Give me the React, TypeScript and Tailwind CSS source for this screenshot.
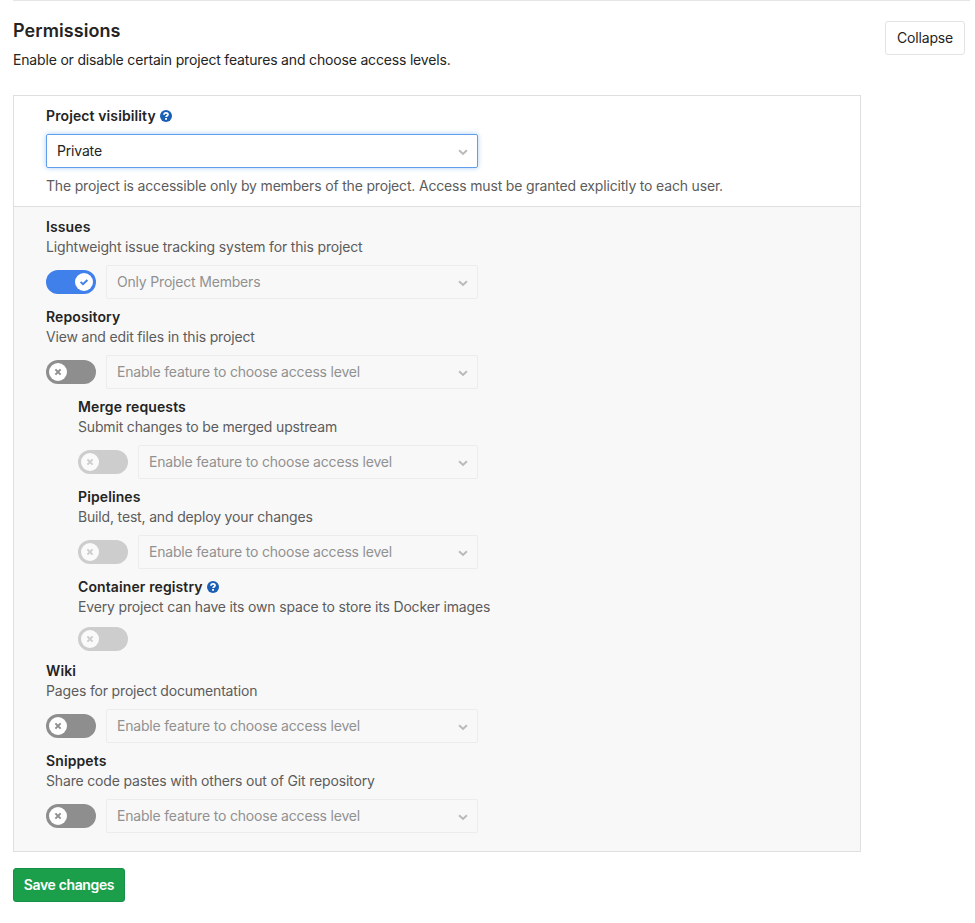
import { ReactNode } from 'react'

interface Feature {
  id: string
  label: string
  description: string
  enabled?: boolean
  disabled?: boolean
  nested?: boolean
  help?: boolean
  access?: string
}

const NO_ACCESS = 'Enable feature to choose access level'

const features: Feature[] = [
  {
    id: 'issues',
    label: 'Issues',
    description: 'Lightweight issue tracking system for this project',
    enabled: true,
    access: 'Only Project Members',
  },
  {
    id: 'repository',
    label: 'Repository',
    description: 'View and edit files in this project',
    access: NO_ACCESS,
  },
  {
    id: 'merge-requests',
    label: 'Merge requests',
    description: 'Submit changes to be merged upstream',
    nested: true,
    disabled: true,
    access: NO_ACCESS,
  },
  {
    id: 'pipelines',
    label: 'Pipelines',
    description: 'Build, test, and deploy your changes',
    nested: true,
    disabled: true,
    access: NO_ACCESS,
  },
  {
    id: 'registry',
    label: 'Container registry',
    description: 'Every project can have its own space to store its Docker images',
    nested: true,
    disabled: true,
    help: true,
  },
  {
    id: 'wiki',
    label: 'Wiki',
    description: 'Pages for project documentation',
    access: NO_ACCESS,
  },
  {
    id: 'snippets',
    label: 'Snippets',
    description: 'Share code pastes with others out of Git repository',
    access: NO_ACCESS,
  },
]

function HelpIcon() {
  return (
    <svg className="ml-1 size-3" viewBox="0 0 12 12" fill="none">
      <circle cx="6" cy="6" r="6" fill="#1b5fb4" />
      <path d="M4 4.7C4.1 3.4 4.9 2.8 6 2.8c1.2 0 2 .6 2 1.6 0 1.3-1.9 1.2-1.9 2.7" stroke="#fff" strokeWidth="1.8" />
      <path d="M5.1 8h1.9v1.7H5.1z" fill="#fff" />
    </svg>
  )
}

function ChevronIcon() {
  return (
    <svg className="mt-0.5 h-[7px] w-2.5" viewBox="0 0 10 7" fill="none">
      <path d="M1.1 1.2 5 4.9l3.9-3.7" stroke="#bababa" strokeWidth="2" />
    </svg>
  )
}

function FieldLabel({ children, help }: { children: ReactNode; help?: boolean }) {
  return (
    <div className="flex h-5 items-center font-semibold tracking-[0.11px] text-[#242424]">
      {children}
      {help && <HelpIcon />}
    </div>
  )
}

function Toggle({ enabled, disabled }: { enabled?: boolean; disabled?: boolean }) {
  return (
    <button
      type="button"
      disabled={disabled}
      className={`flex h-6 w-[50px] shrink-0 items-center rounded-full px-[3px] ${
        enabled ? 'justify-end bg-[#4080eb]' : 'bg-[#8e8e8e]'
      } ${disabled ? 'opacity-40' : ''}`}
    >
      <svg className="size-[18px]" viewBox="0 0 18 18" fill="none">
        <circle cx="9" cy="9" r="9" fill="#fff" />
        {enabled ? (
          <path d="m5.6 8.9 2.4 2.3 4.4-4.2" stroke="#4080eb" strokeWidth="2" />
        ) : (
          <path d="m6.4 6.4 5.2 5.2m0-5.2-5.2 5.2" stroke="#8e8e8e" strokeWidth="2" />
        )}
      </svg>
    </button>
  )
}

function AccessSelect({ value }: { value: string }) {
  return (
    <div className="ml-2.5 flex h-[34px] flex-1 items-center justify-between rounded-[2px] border border-[#ececec] pl-2.5 pr-[9px] tracking-[-0.19px] text-[#919191]">
      <span>{value}</span>
      <ChevronIcon />
    </div>
  )
}

function FeatureRow({ feature }: { feature: Feature }) {
  return (
    <div className={feature.nested ? 'pl-8' : ''}>
      <FieldLabel help={feature.help}>{feature.label}</FieldLabel>
      <div className="h-5 whitespace-nowrap tracking-[-0.165px] text-[#5c5c5c]">{feature.description}</div>
      <div className="my-2 flex min-h-7 items-center">
        <Toggle enabled={feature.enabled} disabled={feature.disabled} />
        {feature.access && <AccessSelect value={feature.access} />}
      </div>
    </div>
  )
}

export default function App() {
  return (
    <div className="min-h-[923px] bg-white pl-[13px] font-['Inter','Liberation_Sans',sans-serif] text-sm/5 tracking-[-0.175px] text-[#242424]">
      <div className="mr-[5px] border-t border-[#e5e5e5]" />
      <header className="flex h-[94px] items-start justify-between pr-2.5 pt-5">
        <div>
          <h4 className="h-5 text-[18px]/5 font-semibold tracking-[0.08px]">Permissions</h4>
          <p className="mt-[9px]">Enable or disable certain project features and choose access levels.</p>
        </div>
        <button type="button" className="h-[34px] w-20 rounded-[3px] border border-[#e3e3e3]">
          Collapse
        </button>
      </header>

      <div className="w-[848px] border border-[#dfdfdf]">
        <div className="border-b border-[#dfdfdf] px-8 py-2.5">
          <FieldLabel help>Project visibility</FieldLabel>
          <div className="my-2 flex h-[34px] w-[432px] items-center justify-between rounded-[2px] border border-[#5f9fec] pl-2.5 pr-[9px] shadow-[0_0_5px_rgba(115,175,240,0.6)]">
            <span>Private</span>
            <ChevronIcon />
          </div>
          <p className="text-[#5c5c5c]">
            The project is accessible only by members of the project. Access must be granted explicitly to each user.
          </p>
        </div>
        <div className="bg-[#f8f8f8] px-8 py-2.5">
          <div className="w-[432px]">
            {features.map((feature) => (
              <FeatureRow key={feature.id} feature={feature} />
            ))}
          </div>
        </div>
      </div>

      <button
        type="button"
        className="mt-4 block h-[34px] w-28 rounded-[3px] border border-[#168f48] bg-[#1b9f4b] font-semibold tracking-[-0.36px] text-white"
      >
        Save changes
      </button>
    </div>
  )
}
